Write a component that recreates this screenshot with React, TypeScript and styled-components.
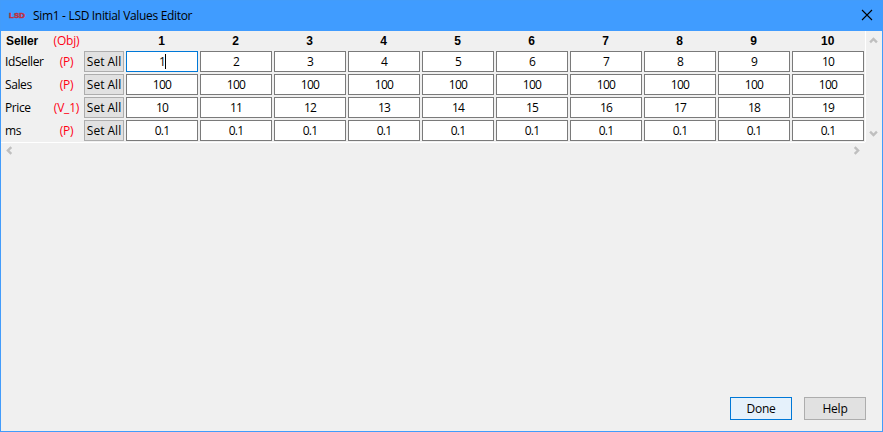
import React from 'react';
import styled, { createGlobalStyle } from 'styled-components';

const GlobalStyle = createGlobalStyle`
  * { box-sizing: border-box; }
  body { margin: 0; overflow: hidden; }
  input, button { font: inherit; color: inherit; border-radius: 0; margin: 0; }
`;

const Window = styled.div`
  width: 883px;
  height: 432px;
  display: flex;
  flex-direction: column;
  background: #f0f0f0;
  border: 1px solid #429cfb;
  font: 12px/16px 'Open Sans', 'Noto Sans', sans-serif;
  letter-spacing: -0.4px;
  color: #000;
`;

const TitleBar = styled.header`
  flex: none;
  height: 30px;
  display: flex;
  align-items: center;
  padding: 0 9px 0 8px;
  background: #409cff;
`;

const Logo = styled.span`
  width: 16px;
  margin-right: 8px;
  font: bold 8px/10px 'Liberation Sans', sans-serif;
  letter-spacing: 0;
  color: #c0303c;
  -webkit-text-stroke: 0.5px #c0303c;
`;

const Title = styled.h1`
  margin: 0;
  flex: 1;
  font-size: 12px;
  font-weight: 400;
  letter-spacing: -0.32px;
`;

const CloseButton = styled.button`
  && {
    display: flex;
    padding: 0;
    border: 0;
    margin-top: -2px;
    background: none;
  }
`;

const Viewport = styled.main`
  display: grid;
  grid-template-columns: 864px 17px;
  grid-template-rows: 111px 17px;
`;

const Table = styled.div`
  display: grid;
  grid-template-columns: 83px 40px repeat(10, 72px);
  grid-template-rows: 18px repeat(4, 21px);
  column-gap: 2px;
  row-gap: 2px;
  margin-left: -2px;
`;

const NameCell = styled.div<{ $header?: boolean }>`
  display: grid;
  grid-template-columns: 42px 38px;
  align-items: center;
  padding-left: 6px;
  padding-top: ${p => (p.$header ? '2px' : '0')};
`;

const Name = styled.span<{ $header?: boolean }>`
  white-space: nowrap;
  ${p => p.$header && `
    font: bold 12px/16px 'Liberation Sans', sans-serif;
    letter-spacing: -0.1px;
    padding-left: 1px;
  `}
`;

const Kind = styled.span`
  color: #ff0014;
  text-align: center;
  letter-spacing: -0.2px;
  padding-left: 1px;
`;

const ColumnHead = styled.div`
  display: flex;
  align-items: center;
  justify-content: center;
  padding: 2px 0.6px 0 0;
  font: bold 12px/16px 'Liberation Sans', sans-serif;
  letter-spacing: 0;
`;

const SetAll = styled.button`
  padding: 1px 0 0;
  border: 1px solid #adadad;
  background: #e1e1e1;
  white-space: nowrap;
  line-height: 16px;
`;

const Cell = styled.div<{ $active?: boolean }>`
  display: flex;
  align-items: center;
  justify-content: center;
  border: 1px solid ${p => (p.$active ? '#0078d7' : '#7a7a7a')};
  background: #fff;
  letter-spacing: -0.75px;
`;

const Caret = styled.i`
  width: 1px;
  height: 15px;
  margin-right: -1px;
  background: #000;
`;

const VerticalBar = styled.div`
  display: flex;
  flex-direction: column;
  justify-content: space-between;
  align-items: center;
  padding: 5px 1px 4px 0;
  border-left: 1px solid #fff;
`;

const HorizontalBar = styled.div`
  display: flex;
  justify-content: space-between;
  align-items: center;
  padding: 0 4px 1px;
  border-top: 1px solid #fff;
`;

const Footer = styled.footer`
  margin-top: auto;
  display: flex;
  justify-content: flex-end;
  gap: 12px;
  padding: 0 16px 11px 0;
`;

const ActionButton = styled.button<{ $primary?: boolean }>`
  width: 62px;
  height: 23px;
  padding: 0;
  border: 1px solid ${p => (p.$primary ? '#0078d7' : '#adadad')};
  background: ${p => (p.$primary ? '#e5f1fb' : '#e1e1e1')};
  line-height: 16px;
  letter-spacing: -0.25px;
`;

const ANGLES = { up: 0, right: 90, down: 180, left: 270 };

const Arrow = ({ to }: { to: keyof typeof ANGLES }) => (
  <svg width="9" height="9" viewBox="0 0 9 9" fill="none" stroke="#bfbfbf" strokeWidth="2.4">
    <path d="M1.1 6.3 4.5 2.9 7.9 6.3" transform={`rotate(${ANGLES[to]} 4.5 4.5)`} />
  </svg>
);

const columns = Array.from({ length: 10 }, (_, i) => i + 1);

const rows = [
  { name: 'IdSeller', kind: '(P)', value: (n: number) => `${n}` },
  { name: 'Sales', kind: '(P)', value: () => '100' },
  { name: 'Price', kind: '(V_1)', value: (n: number) => `${n + 9}` },
  { name: 'ms', kind: '(P)', value: () => '0.1' },
];

export default function App() {
  return (
    <>
      <GlobalStyle />
      <Window>
        <TitleBar>
          <Logo>LSD</Logo>
          <Title>Sim1 - LSD Initial Values Editor</Title>
          <CloseButton aria-label="Close">
            <svg width="12" height="12" viewBox="0 0 12 12" stroke="#000" strokeWidth="1.1">
              <path d="M1 1 11 11M11 1 1 11" />
            </svg>
          </CloseButton>
        </TitleBar>
        <Viewport>
          <Table>
            <NameCell $header>
              <Name $header>Seller</Name>
              <Kind>(Obj)</Kind>
            </NameCell>
            <span />
            {columns.map(n => <ColumnHead key={n}>{n}</ColumnHead>)}
            {rows.map((row, r) => (
              <React.Fragment key={row.name}>
                <NameCell>
                  <Name>{row.name}</Name>
                  <Kind>{row.kind}</Kind>
                </NameCell>
                <SetAll>Set All</SetAll>
                {columns.map(n => (
                  <Cell key={n} $active={r === 0 && n === 1}>
                    {row.value(n)}
                    {r === 0 && n === 1 && <Caret />}
                  </Cell>
                ))}
              </React.Fragment>
            ))}
          </Table>
          <VerticalBar>
            <Arrow to="up" />
            <Arrow to="down" />
          </VerticalBar>
          <HorizontalBar>
            <Arrow to="left" />
            <Arrow to="right" />
          </HorizontalBar>
        </Viewport>
        <Footer>
          <ActionButton $primary>Done</ActionButton>
          <ActionButton>Help</ActionButton>
        </Footer>
      </Window>
    </>
  );
}
